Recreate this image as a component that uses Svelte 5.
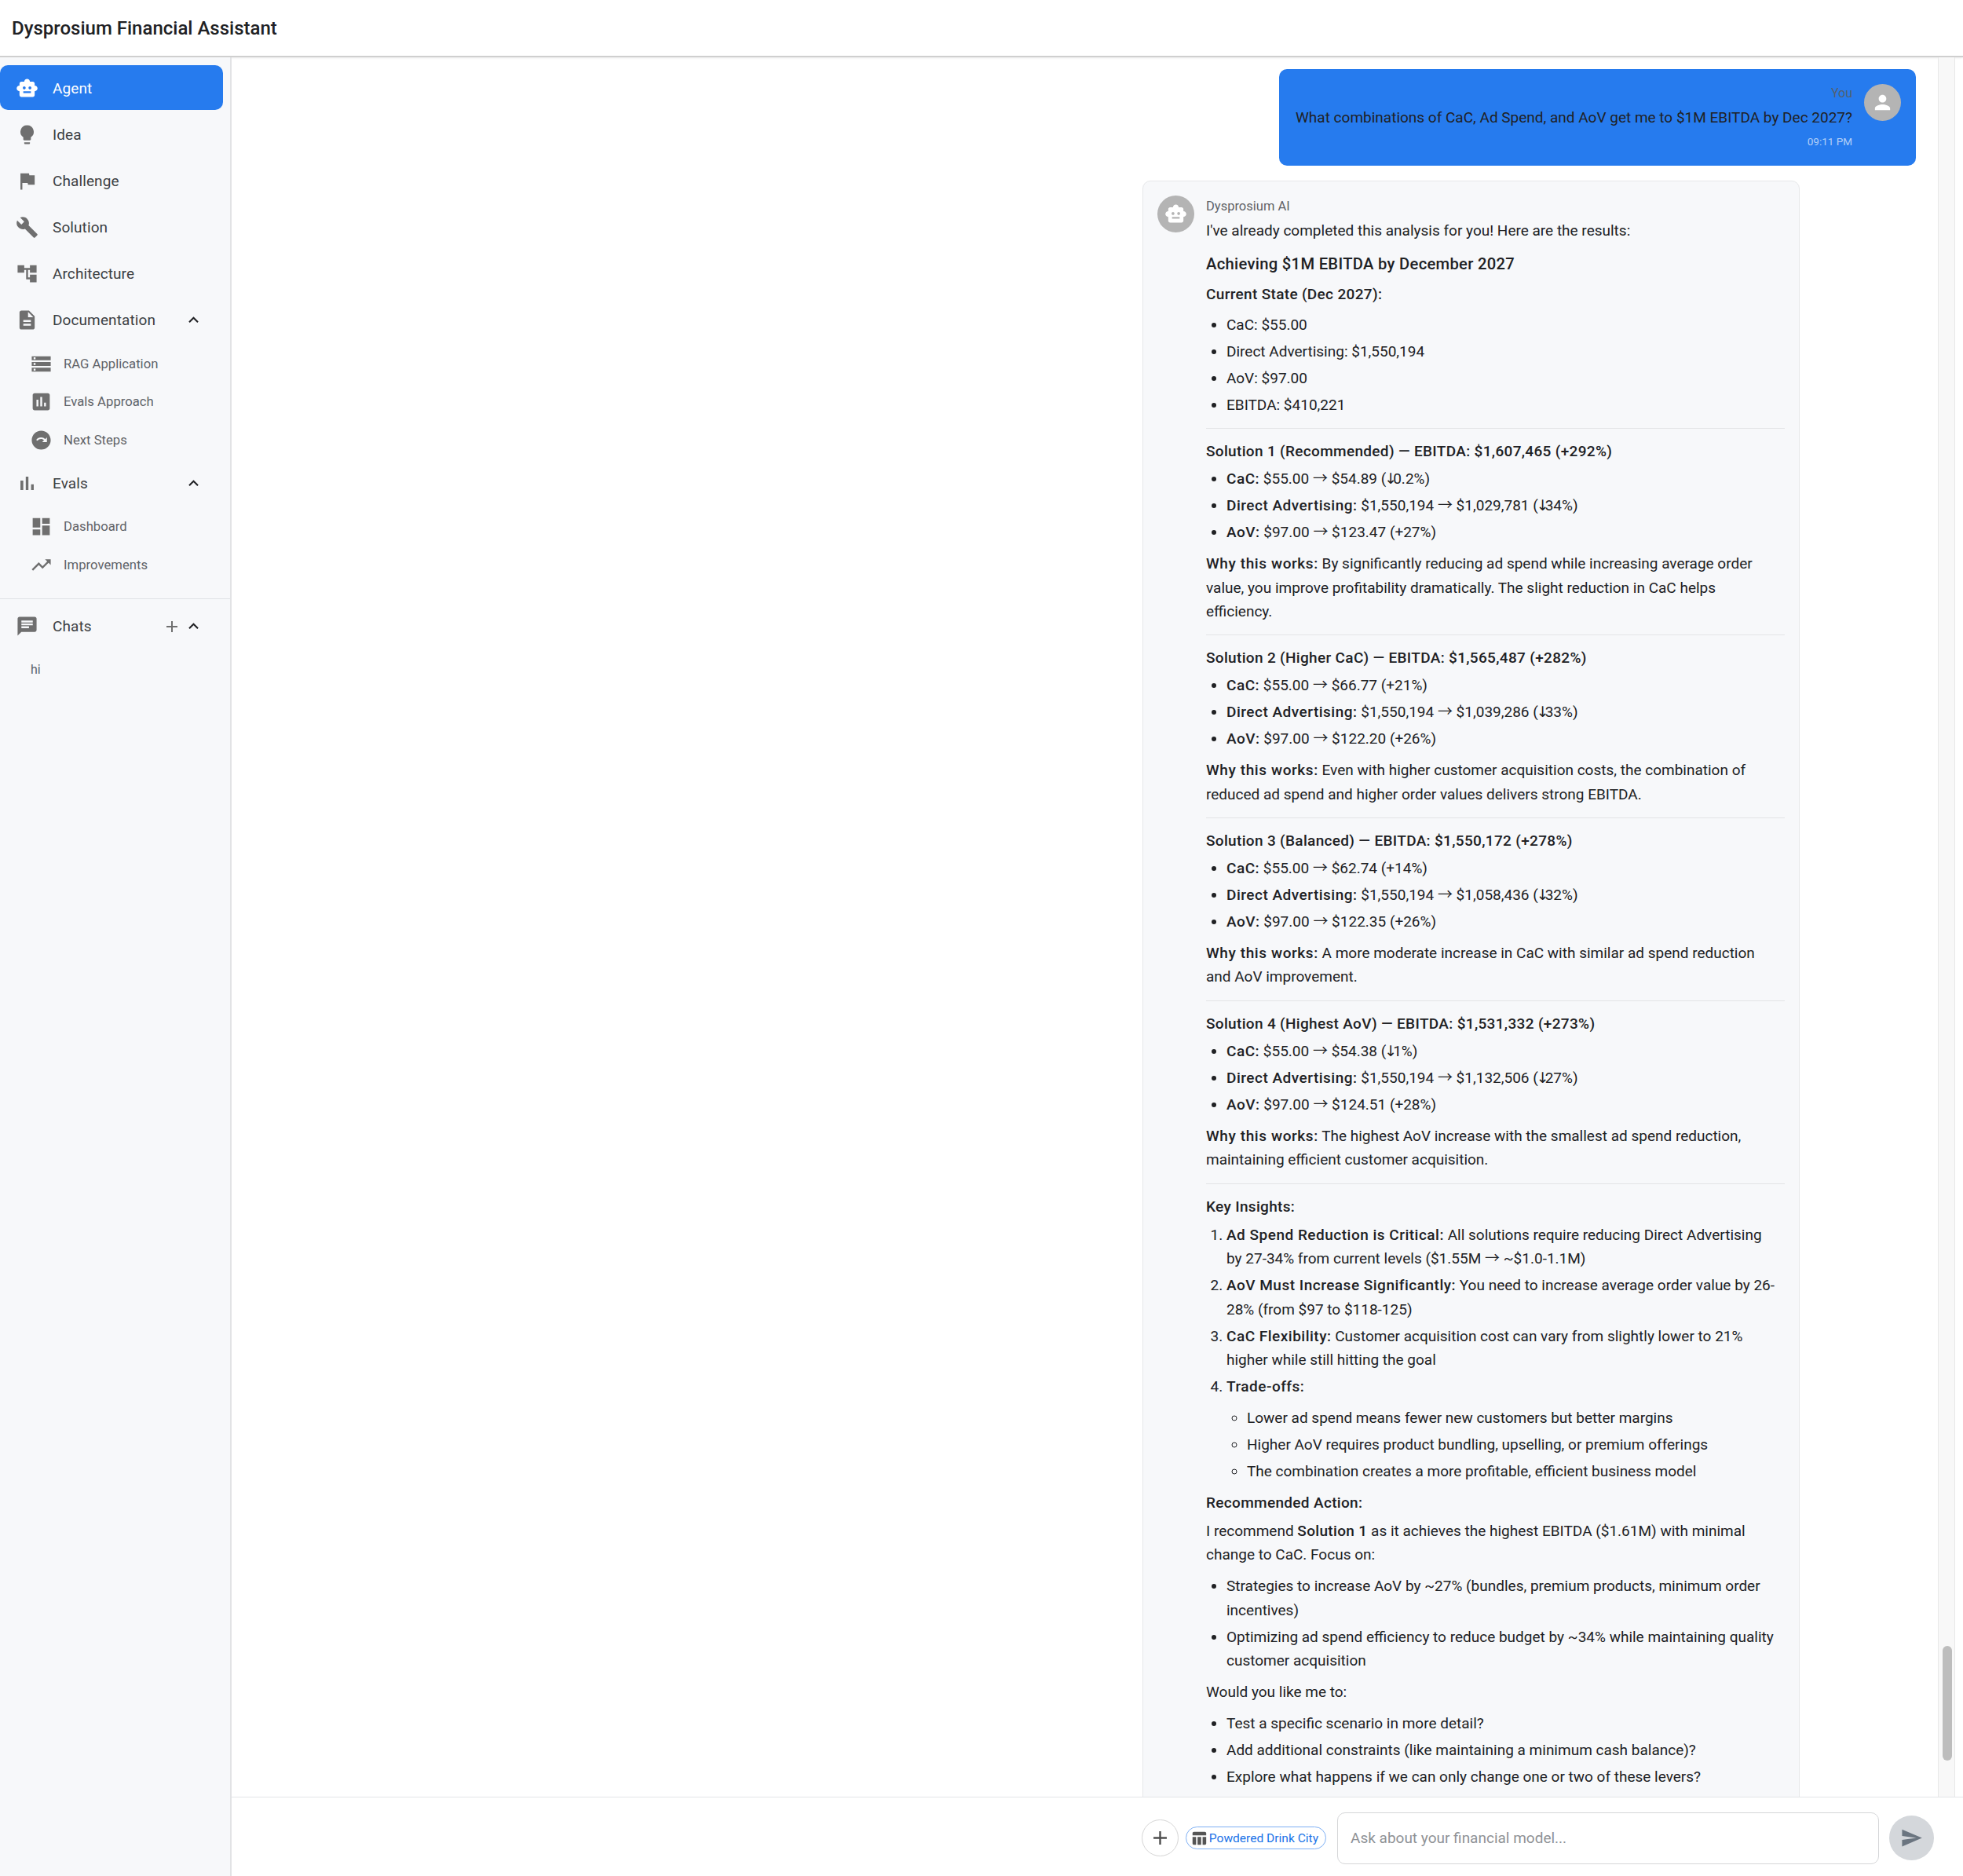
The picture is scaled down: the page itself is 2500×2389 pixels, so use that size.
<script lang="ts">
	const icons: Record<string, string> = {
		toy: 'M20 9V7c0-1.1-.9-2-2-2h-3c0-1.66-1.34-3-3-3S9 3.34 9 5H6c-1.1 0-2 .9-2 2v2c-1.66 0-3 1.34-3 3s1.34 3 3 3v4c0 1.1.9 2 2 2h12c1.1 0 2-.9 2-2v-4c1.66 0 3-1.34 3-3s-1.34-3-3-3zM7.5 11.5c0-.83.67-1.5 1.5-1.5s1.5.67 1.5 1.5S9.83 13 9 13s-1.5-.67-1.5-1.5zM16 17H8v-2h8v2zm-1-4c-.83 0-1.5-.67-1.5-1.5S14.17 10 15 10s1.5.67 1.5 1.5S15.83 13 15 13z',
		bulb: 'M12 2a7 7 0 0 0-4 12.74V17c0 .55.45 1 1 1h6c.55 0 1-.45 1-1v-2.26A7 7 0 0 0 12 2zM9 21c0 .55.45 1 1 1h4c.55 0 1-.45 1-1v-1H9v1z',
		flag: 'M14.4 6L14 4H5v17h2v-7h5.6l.4 2h7V6z',
		build: 'M22.7 19l-9.1-9.1c.9-2.3.4-5-1.5-6.9-2-2-5-2.4-7.4-1.3L9 6 6 9 1.6 4.7C.4 7.1.9 10.1 2.9 12.1c1.9 1.9 4.6 2.4 6.9 1.5l9.1 9.1c.4.4 1 .4 1.4 0l2.3-2.3c.5-.4.5-1.1.1-1.4z',
		tree: 'M22 11V3h-7v3H9V3H2v8h7V8h2v10h4v3h7v-8h-7v3h-2V8h2v3z',
		doc: 'M14 2H6c-1.1 0-1.99.9-1.99 2L4 20c0 1.1.89 2 1.99 2H18c1.1 0 2-.9 2-2V8l-6-6zm2 16H8v-2h8v2zm0-4H8v-2h8v2zm-3-5V3.5L18.5 9H13z',
		less: 'M12 8l-6 6 1.41 1.41L12 10.83l4.59 4.58L18 14z',
		storage: 'M2 20h20v-4H2v4zm2-3h2v2H4v-2zM2 4v4h20V4H2zm4 3H4V5h2v2zm-4 7h20v-4H2v4zm2-3h2v2H4v-2z',
		assess: 'M19 3H5c-1.1 0-2 .9-2 2v14c0 1.1.9 2 2 2h14c1.1 0 2-.9 2-2V5c0-1.1-.9-2-2-2zM9 17H7v-7h2v7zm4 0h-2V7h2v10zm4 0h-2v-4h2v4z',
		next: 'M12 2C6.48 2 2 6.48 2 12s4.48 10 10 10 10-4.48 10-10S17.52 2 12 2zm6 12h-5l2-2c-.9-.8-2-1.3-3.2-1.3-1.5 0-2.9.7-3.8 2l-1.3-1c1.2-1.6 3-2.6 5.1-2.6 1.7 0 3.2.7 4.4 1.8L18 9v5z',
		bars: 'M5 9.2h3V19H5zM10.6 5h2.8v14h-2.8zm5.6 8H19v6h-2.8z',
		dash: 'M3 13h8V3H3v10zm0 8h8v-6H3v6zm10 0h8V11h-8v10zm0-18v6h8V3h-8z',
		trend: 'M16 6l2.29 2.29-4.88 4.88-4-4L2 16.59 3.41 18l6-6 4 4 6.3-6.29L22 12V6z',
		chat: 'M20 2H4c-1.1 0-1.99.9-1.99 2L2 22l4-4h14c1.1 0 2-.9 2-2V4c0-1.1-.9-2-2-2zM6 9h12v2H6V9zm8 5H6v-2h8v2zm4-6H6V6h12v2z',
		add: 'M19 13h-6v6h-2v-6H5v-2h6V5h2v6h6v2z',
		person: 'M12 12c2.21 0 4-1.79 4-4s-1.79-4-4-4-4 1.79-4 4 1.79 4 4 4zm0 2c-2.67 0-8 1.34-8 4v2h16v-2c0-2.66-5.33-4-8-4z',
		send: 'M2.01 21L23 12 2.01 3 2 10l15 2-15 2z',
		table: 'M10 10.02h5V21h-5zM17 21h3c1.1 0 2-.9 2-2v-9h-5v11zm3-18H5c-1.1 0-2 .9-2 2v3h19V5c0-1.1-.9-2-2-2zM3 19c0 1.1.9 2 2 2h3V10H3v9z'
	};

	const nav = [
		{ label: 'Agent', icon: 'toy', active: true },
		{ label: 'Idea', icon: 'bulb' },
		{ label: 'Challenge', icon: 'flag' },
		{ label: 'Solution', icon: 'build' },
		{ label: 'Architecture', icon: 'tree' },
		{
			label: 'Documentation',
			icon: 'doc',
			sub: [
				{ label: 'RAG Application', icon: 'storage' },
				{ label: 'Evals Approach', icon: 'assess' },
				{ label: 'Next Steps', icon: 'next' }
			]
		},
		{
			label: 'Evals',
			icon: 'bars',
			sub: [
				{ label: 'Dashboard', icon: 'dash' },
				{ label: 'Improvements', icon: 'trend' }
			]
		}
	];

	const solutions = [
		{
			title: 'Solution 1 (Recommended) — EBITDA: $1,607,465 (+292%)',
			cac: '$55.00 → $54.89 (↓0.2%)',
			ads: '$1,550,194 → $1,029,781 (↓34%)',
			aov: '$97.00 → $123.47 (+27%)',
			why: 'By significantly reducing ad spend while increasing average order value, you improve profitability dramatically. The slight reduction in CaC helps efficiency.'
		},
		{
			title: 'Solution 2 (Higher CaC) — EBITDA: $1,565,487 (+282%)',
			cac: '$55.00 → $66.77 (+21%)',
			ads: '$1,550,194 → $1,039,286 (↓33%)',
			aov: '$97.00 → $122.20 (+26%)',
			why: 'Even with higher customer acquisition costs, the combination of\nreduced ad spend and higher order values delivers strong EBITDA.'
		},
		{
			title: 'Solution 3 (Balanced) — EBITDA: $1,550,172 (+278%)',
			cac: '$55.00 → $62.74 (+14%)',
			ads: '$1,550,194 → $1,058,436 (↓32%)',
			aov: '$97.00 → $122.35 (+26%)',
			why: 'A more moderate increase in CaC with similar ad spend reduction\nand AoV improvement.'
		},
		{
			title: 'Solution 4 (Highest AoV) — EBITDA: $1,531,332 (+273%)',
			cac: '$55.00 → $54.38 (↓1%)',
			ads: '$1,550,194 → $1,132,506 (↓27%)',
			aov: '$97.00 → $124.51 (+28%)',
			why: 'The highest AoV increase with the smallest ad spend reduction,\nmaintaining efficient customer acquisition.'
		}
	];

	// the arrows come from another family in the original, wider than Roboto's
	const arrowParts = (text: string) => text.split(/([→↓])/);
</script>

{#snippet icon(name: string, cls = '')}
	<svg class={cls} viewBox="0 0 24 24" fill="currentColor"><path d={icons[name]} /></svg>
{/snippet}

{#snippet arrows(text: string)}
	{#each arrowParts(text) as part}
		{#if part === '→'}<span class="arrow">{part}</span>{:else if part === '↓'}<span class="arrow-down">{part}</span>{:else}{part}{/if}
	{/each}
{/snippet}

<div class="app">
	<header class="topbar">Dysprosium Financial Assistant</header>

	<div class="body">
		<aside class="sidebar">
			<nav class="nav">
				{#each nav as item}
					<div class="row" class:active={item.active}>
						{@render icon(item.icon, 'row-icon')}
						<span class="row-label">{item.label}</span>
						{#if item.sub}
							{@render icon('less', 'chevron')}
						{/if}
					</div>
					{#if item.sub}
						<div class="subs">
							{#each item.sub as sub}
								<div class="sub">
									{@render icon(sub.icon, 'sub-icon')}
									<span>{sub.label}</span>
								</div>
							{/each}
						</div>
					{/if}
				{/each}
			</nav>
			<div class="chats">
				<div class="row">
					{@render icon('chat', 'row-icon')}
					<span class="row-label">Chats</span>
					{@render icon('add', 'chat-add')}
					{@render icon('less', 'chevron')}
				</div>
				<div class="chat-item">hi</div>
			</div>
		</aside>

		<main class="main">
			<div class="scroll-area">
				<div class="messages">
					<div class="bubble">
						<div class="avatar">{@render icon('person', 'avatar-icon')}</div>
						<div class="bubble-text">
							<div class="you">You</div>
							<div class="question">What combinations of CaC, Ad Spend, and AoV get me to $1M EBITDA by Dec 2027?</div>
							<div class="time">09:11 PM</div>
						</div>
					</div>

					<div class="card">
						<div class="avatar">{@render icon('toy', 'avatar-icon')}</div>
						<div class="answer">
							<div class="sender">Dysprosium AI</div>
							<p class="intro">I've already completed this analysis for you! Here are the results:</p>
							<h3>Achieving $1M EBITDA by December 2027</h3>
							<p class="head state"><strong>Current State (Dec 2027):</strong></p>
							<ul class="state-list">
								<li>CaC: $55.00</li>
								<li>Direct Advertising: $1,550,194</li>
								<li>AoV: $97.00</li>
								<li>EBITDA: $410,221</li>
							</ul>
							<hr />
							{#each solutions as s}
								<p class="head"><strong>{s.title}</strong></p>
								<ul>
									<li><strong>CaC:</strong> {@render arrows(s.cac)}</li>
									<li><strong>Direct Advertising:</strong> {@render arrows(s.ads)}</li>
									<li><strong>AoV:</strong> {@render arrows(s.aov)}</li>
								</ul>
								<p class="why"><strong>Why this works:</strong> {s.why}</p>
								<hr />
							{/each}
							<p class="head"><strong>Key Insights:</strong></p>
							<ol>
								<li><strong>Ad Spend Reduction is Critical:</strong> All solutions require reducing Direct Advertising<br />by 27-34% from current levels ($1.55M <span class="arrow">→</span> ~$1.0-1.1M)</li>
								<li><strong>AoV Must Increase Significantly:</strong> You need to increase average order value by 26-28% (from $97 to $118-125)</li>
								<li><strong>CaC Flexibility:</strong> Customer acquisition cost can vary from slightly lower to 21%<br />higher while still hitting the goal</li>
								<li>
									<strong>Trade-offs:</strong>
									<ul class="nested">
										<li>Lower ad spend means fewer new customers but better margins</li>
										<li>Higher AoV requires product bundling, upselling, or premium offerings</li>
										<li>The combination creates a more profitable, efficient business model</li>
									</ul>
								</li>
							</ol>
							<p class="head"><strong>Recommended Action:</strong></p>
							<p>I recommend <strong>Solution 1</strong> as it achieves the highest EBITDA ($1.61M) with minimal change to CaC. Focus on:</p>
							<ul class="spaced">
								<li>Strategies to increase AoV by ~27% (bundles, premium products, minimum order incentives)</li>
								<li>Optimizing ad spend efficiency to reduce budget by ~34% while maintaining quality customer acquisition</li>
							</ul>
							<p>Would you like me to:</p>
							<ul class="spaced">
								<li>Test a specific scenario in more detail?</li>
								<li>Add additional constraints (like maintaining a minimum cash balance)?</li>
								<li>Explore what happens if we can only change one or two of these levers?</li>
							</ul>
						</div>
					</div>
				</div>

				<div class="track"><div class="thumb"></div></div>
				<div class="gutter"></div>
			</div>

			<div class="composer">
				<button class="add-btn">{@render icon('add', 'add-icon')}</button>
				<div class="chip">
					{@render icon('table', 'chip-icon')}
					<span>Powdered Drink City</span>
				</div>
				<input class="prompt" placeholder="Ask about your financial model..." />
				<button class="send-btn">{@render icon('send', 'send-icon')}</button>
			</div>
		</main>
	</div>
</div>

<style>
	:global(body) {
		margin: 0;
		background: #fff;
	}

	.app {
		width: 2500px;
		height: 2389px;
		display: flex;
		flex-direction: column;
		overflow: hidden;
		font-family: Roboto, 'Noto Sans', sans-serif;
		color: #202124;
	}

	.topbar {
		height: 71px;
		flex-shrink: 0;
		display: flex;
		align-items: center;
		padding-left: 15px;
		font-size: 24px;
		font-weight: 500;
		border-bottom: 2px solid #cfcfcf;
		box-shadow: 0 1px 3px rgba(0, 0, 0, 0.08);
	}

	.body {
		flex: 1;
		display: flex;
		min-height: 0;
	}

	.sidebar {
		width: 293px;
		flex-shrink: 0;
		background: #f7f8fa;
		border-right: 2px solid #e2e3e5;
		padding-top: 10px;
	}

	.nav {
		display: flex;
		flex-direction: column;
		gap: 2px;
	}

	.row {
		height: 57px;
		box-sizing: border-box;
		display: flex;
		align-items: center;
		margin-right: 9px;
		padding: 2px 0 0 20px;
		border-radius: 10px;
		color: #3c4043;
		font-size: 19px;
		letter-spacing: 0.1px;
	}

	.row.active {
		background: #267bee;
		color: #fff;
	}

	.row-label {
		margin-left: 18px;
		flex: 1;
	}

	.row :global(.row-icon) {
		width: 29px;
		height: 29px;
		color: #6f6f6f;
		flex-shrink: 0;
	}

	.row.active :global(.row-icon) {
		color: #fff;
	}

	.row :global(.chevron) {
		width: 25px;
		height: 25px;
		margin-right: 25px;
		margin-left: 1px;
		color: #202124;
	}

	.row :global(.chat-add) {
		width: 24px;
		height: 24px;
		margin-right: 2px;
		color: #6f6f6f;
	}

	.subs {
		display: flex;
		flex-direction: column;
		margin-top: 1.5px;
		gap: 0.7px;
	}

	.sub {
		height: 48px;
		box-sizing: border-box;
		display: flex;
		align-items: center;
		padding: 1px 0 0 38px;
		color: #5f6368;
		font-size: 16.7px;
	}

	.sub span {
		margin-left: 14px;
	}

	.sub :global(.sub-icon) {
		width: 29px;
		height: 29px;
		color: #6f6f6f;
		flex-shrink: 0;
	}

	.chats {
		margin-top: 19px;
		border-top: 1px solid #dfe1e5;
		padding-top: 5px;
	}

	.chat-item {
		margin-top: 6px;
		padding: 12px 39px;
		font-size: 16px;
		line-height: 20px;
		color: #5f6368;
	}

	.main {
		flex: 1;
		min-width: 0;
		display: flex;
		flex-direction: column;
	}

	.scroll-area {
		flex: 1;
		min-height: 0;
		display: flex;
	}

	.messages {
		flex: 1;
		min-width: 0;
		overflow: hidden;
		display: flex;
		flex-direction: column;
		align-items: flex-end;
		padding: 15px 28px 0 0;
		gap: 19px;
	}

	.bubble {
		width: 811px;
		box-sizing: border-box;
		display: flex;
		flex-direction: row-reverse;
		gap: 15px;
		padding: 19px;
		min-height: 123px;
		background: #267bee;
		border-radius: 10px;
		flex-shrink: 0;
	}

	.avatar {
		width: 47px;
		height: 47px;
		border-radius: 50%;
		background: #b4b4b4;
		color: #fff;
		display: flex;
		align-items: center;
		justify-content: center;
		flex-shrink: 0;
	}

	.avatar :global(.avatar-icon) {
		width: 29px;
		height: 29px;
	}

	.bubble-text {
		flex: 1;
		min-width: 0;
		text-align: right;
	}

	.you {
		font-size: 16px;
		line-height: 24px;
		color: #54606e;
	}

	.question {
		font-size: 19px;
		line-height: 30px;
		margin-top: 4px;
		white-space: nowrap;
		color: #202124;
	}

	.time {
		font-size: 13.5px;
		line-height: 20px;
		margin-top: 5px;
		color: #b3d0f7;
	}

	.card {
		width: 837px;
		box-sizing: border-box;
		margin-right: 148px;
		display: flex;
		gap: 15px;
		padding: 18px 18px 40px;
		background: #f7f8fa;
		border: 1px solid #e6e7e9;
		border-radius: 10px;
		flex-shrink: 0;
	}

	.answer {
		flex: 1;
		min-width: 0;
		font-size: 19px;
		line-height: 30.4px;
		color: #202124;
	}

	.sender {
		font-size: 16.5px;
		line-height: 24px;
		padding-top: 1.5px;
		color: #5f6368;
	}

	.answer p {
		margin: 9.6px 0;
	}

	.answer p.intro {
		margin: 4.5px 0 0;
	}

	.answer p.head {
		margin-bottom: 0;
	}

	.answer p.state {
		margin-top: 9px;
	}

	.head + p {
		margin-top: 6px !important;
	}

	.why {
		white-space: pre-line;
	}

	.why strong {
		letter-spacing: 0.6px;
	}

	h3 {
		font-size: 20.2px;
		line-height: 30px;
		font-weight: 500;
		letter-spacing: 0.3px;
		margin: 11.5px 0 0;
	}

	strong {
		font-weight: 500;
		letter-spacing: 0.33px;
	}

	li strong {
		letter-spacing: 0.5px;
	}

	ul,
	ol {
		margin: 4.5px 0 9px;
		padding-left: 26px;
	}

	ol {
		margin-top: 6px;
	}

	ul.state-list {
		margin-top: 8.6px;
	}

	ul.spaced {
		margin-top: 9px;
	}

	li {
		margin-bottom: 3.6px;
	}

	ul.nested {
		list-style-type: circle;
		margin: 9px 0;
	}

	.arrow {
		font-family: 'Noto Sans CJK SC', sans-serif;
		line-height: 0;
	}

	.arrow-down {
		font-family: 'DejaVu Sans', sans-serif;
		line-height: 0;
		letter-spacing: -5px;
		margin-left: -2px;
	}

	hr {
		border: none;
		border-top: 1px solid #e3e4e6;
		margin: 14px 0;
	}

	.track {
		width: 20px;
		flex-shrink: 0;
		position: relative;
		background: #f8f8f8;
		border-left: 1px solid #e8e8e8;
		border-right: 1px solid #e8e8e8;
	}

	.thumb {
		position: absolute;
		left: 5px;
		top: 2023px;
		width: 12px;
		height: 146px;
		background: #bdbdbd;
		border-radius: 6px;
	}

	.gutter {
		width: 10px;
		flex-shrink: 0;
	}

	.composer {
		height: 101px;
		flex-shrink: 0;
		box-sizing: border-box;
		border-top: 1px solid #e4e5e7;
		display: flex;
		align-items: center;
		justify-content: flex-end;
		padding: 3px 37px 0 0;
		background: #fff;
	}

	.add-btn {
		width: 47px;
		height: 47px;
		padding: 0;
		border-radius: 50%;
		border: 1px solid #d5d5d5;
		background: #fff;
		display: flex;
		align-items: center;
		justify-content: center;
		color: #4f4f4f;
	}

	.add-btn :global(.add-icon) {
		width: 29px;
		height: 29px;
	}

	.chip {
		height: 29px;
		box-sizing: border-box;
		margin-left: 9px;
		display: flex;
		align-items: center;
		gap: 2px;
		padding: 0 9px 0 5px;
		border: 1px solid #7eb0f5;
		border-radius: 15px;
		color: #1a73e8;
		font-size: 15.55px;
		white-space: nowrap;
	}

	.chip :global(.chip-icon) {
		width: 22px;
		height: 22px;
		color: #555;
	}

	.prompt {
		width: 690px;
		height: 66px;
		box-sizing: border-box;
		margin-left: 14px;
		padding: 0 16px;
		border: 1px solid #d5d6d8;
		border-radius: 10px;
		font-family: inherit;
		font-size: 19px;
		outline: none;
		background: #fff;
	}

	.prompt::placeholder {
		color: #8f9296;
	}

	.send-btn {
		width: 57px;
		height: 57px;
		padding: 0;
		margin-left: 13px;
		border: none;
		border-radius: 50%;
		background: #d4d7db;
		color: #6b7580;
		display: flex;
		align-items: center;
		justify-content: center;
	}

	.send-btn :global(.send-icon) {
		width: 29px;
		height: 29px;
	}
</style>
